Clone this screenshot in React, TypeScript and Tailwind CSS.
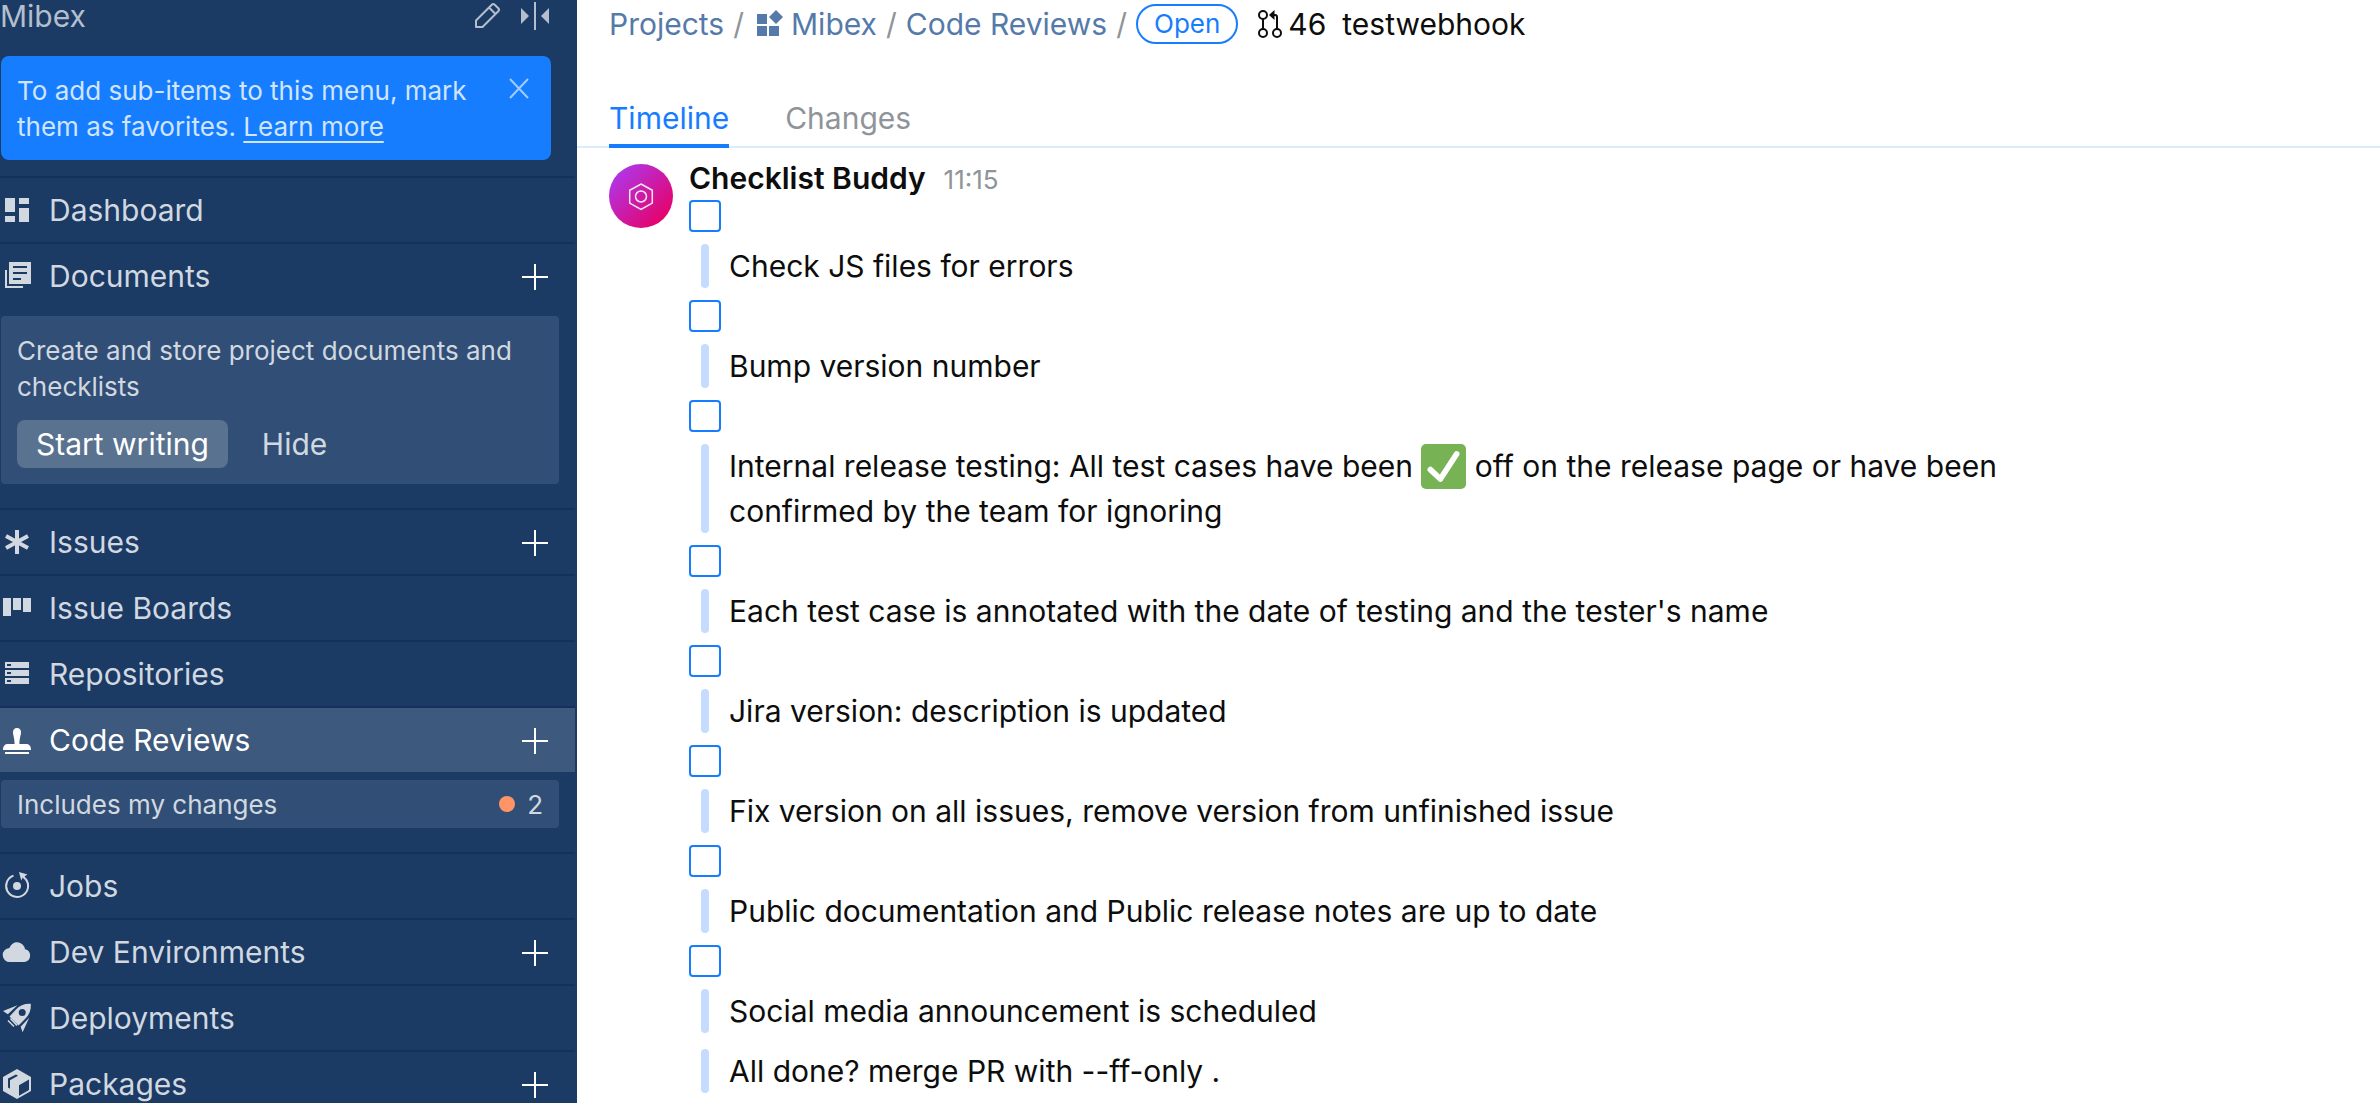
import type { ReactNode } from "react";

function Svg({ children }: { children: ReactNode }) {
  return (
    <svg viewBox="0 0 32 32" className="size-8 shrink-0" fill="currentColor" aria-hidden="true">
      {children}
    </svg>
  );
}

const icons: Record<string, ReactNode> = {
  dashboard: (
    <Svg>
      <path d="M4 4h10v14H4zM4 22h10v6H4zM18 4h10v6H18zM18 14h10v14H18z" />
    </Svg>
  ),
  documents: (
    <Svg>
      <path fillRule="evenodd" d="M8 2h22v22H8zM12 6v2h14V6zM12 12v2h14v-2zM12 18v2h8v-2z" />
      <path d="M4 10h2v16h16v2H4z" />
    </Svg>
  ),
  issues: (
    <Svg>
      <path d="M16 4v24M5 10l22 12M27 10L5 22" stroke="currentColor" strokeWidth="4" />
    </Svg>
  ),
  boards: (
    <Svg>
      <path d="M2 6h8v18H2zM12 6h8v12h-8zM22 6h8v14h-8z" />
    </Svg>
  ),
  repositories: (
    <Svg>
      <path
        fillRule="evenodd"
        d="M4 4h24v6H4zM6 6v2h4V6zM4 12h24v6H4zM6 14v2h4v-2zM4 20h24v6H4zM6 22v2h4v-2z"
      />
    </Svg>
  ),
  reviews: (
    <Svg>
      <path d="M16 4c2.600 0 4 1.800 4 4.200 0 3-1.600 6-1.600 11.800H25c3 0 5 1.800 5 6H2c0-4.200 2-6 5-6h6.600C13.600 14.200 12 11.200 12 8.200 12 5.800 13.400 4 16 4zM4 28h24v2H4z" />
    </Svg>
  ),
  jobs: (
    <Svg>
      <path
        d="M12.500 5.600A11 11 0 1 0 24.600 9"
        fill="none"
        stroke="currentColor"
        strokeWidth="2"
      />
      <circle cx="16" cy="16" r="4" />
      <path d="M18 2l8.500 2.600-2.900 1.600 1.600 2.400-1.800 1.200-1.600-2.300-1.600 2.900z" />
    </Svg>
  ),
  cloud: (
    <Svg>
      <path d="M9 26a7 7 0 0 1-.6-14A8 8 0 0 1 24 13.200 6.500 6.500 0 0 1 23.500 26z" />
    </Svg>
  ),
  deployments: (
    <Svg>
      <path
        fillRule="evenodd"
        d="M29.800 1.800C30.200 8 28.400 12.500 24 17l-6.500 6.500-9-9 6.500-7C18.500 3.500 23.500 1.500 29.800 1.800zM21.200 7a3.500 3.500 0 1 0 0 7 3.500 3.500 0 0 0 0-7z"
      />
      <path d="M16.500 3.200L6.800 12.200 2 9zM28.200 15.800l-8.600 9 2 5.400z" />
      <path d="M9.500 16.500l6.500 7M7 18.500l6 6" stroke="currentColor" strokeWidth="1.600" />
    </Svg>
  ),
  packages: (
    <Svg>
      <path
        fillRule="evenodd"
        d="M16 1l14 8v14l-14 8-14-8V9zM28 11.400l-10 5.800v10.600l10-5.800zM7 10.500v9l2 1.200v-8.400l8-4.600-2-1.200z"
      />
    </Svg>
  ),
};

type Item = { label: string; icon: string; add?: boolean; active?: boolean; panel?: ReactNode };

const items: Item[] = [
  { label: "Dashboard", icon: "dashboard" },
  {
    label: "Documents",
    icon: "documents",
    add: true,
    panel: (
      <div className="mt-2 mr-4 mb-6 ml-px rounded-sm bg-[#314f76] px-4 pt-[17px] pb-4 text-[#d1d8e0]">
        <p className="text-[26px] leading-9">Create and store project documents and checklists</p>
        <div className="mt-[15px] flex">
          <button className="h-12 rounded-lg bg-[#59728f] px-[19px] text-[30px] leading-[44px] text-white">
            Start writing
          </button>
          <button className="h-12 px-[34px] text-[30px] leading-[44px]">Hide</button>
        </div>
      </div>
    ),
  },
  { label: "Issues", icon: "issues", add: true },
  { label: "Issue Boards", icon: "boards" },
  { label: "Repositories", icon: "repositories" },
  {
    label: "Code Reviews",
    icon: "reviews",
    add: true,
    active: true,
    panel: (
      <a
        href="#my-changes"
        className="mt-2 mr-4 mb-6 ml-px flex h-12 items-center rounded-sm bg-[#314f76] px-4 pt-0.5 text-[26px] leading-9 text-[#d1d8e0]"
      >
        <span className="flex-1">Includes my changes</span>
        <span className="mr-3 mb-0.5 size-4 rounded-full bg-[#ff9466]" />
        <span>2</span>
      </a>
    ),
  },
  { label: "Jobs", icon: "jobs" },
  { label: "Dev Environments", icon: "cloud", add: true },
  { label: "Deployments", icon: "deployments" },
  { label: "Packages", icon: "packages", add: true },
];

function Sidebar() {
  return (
    <aside className="w-[577px] shrink-0 bg-[#1b3a64] pr-0.5 text-[#d1d8e0]">
      <header className="flex h-8 items-center text-[30px] leading-8 text-[#b3bfcd]">
        <span className="flex-1">Mibex</span>
        <button aria-label="Edit menu" className="mr-4">
          <Svg>
            <path
              d="M5 27v-6.500L20.800 4.700c.9-.9 2-.9 2.900 0l3.600 3.600c.9.900.9 2 0 2.900L11.500 27zM18 7.500l6.500 6.500"
              fill="none"
              stroke="currentColor"
              strokeWidth="2"
              strokeLinejoin="round"
            />
          </Svg>
        </button>
        <button aria-label="Collapse menu" className="mr-6">
          <Svg>
            <path d="M15 2h2v28h-2zM2 8v16l8-8zM30 8v16l-8-8z" />
          </Svg>
        </button>
      </header>

      <section className="mt-6 mr-6 mb-4 ml-px flex rounded-lg bg-[#177dff] px-4 pt-[17px] pb-[15px] text-[26px] leading-9 text-[#d1e5ff]">
        <p className="flex-1">
          To add sub-items to this menu, mark them as favorites.{" "}
          <a href="#favorites" className="underline decoration-2 underline-offset-[5px]">
            Learn more
          </a>
        </p>
        <button aria-label="Close" className="h-8 text-[#a2cbff]">
          <Svg>
            <path d="M7 6l18 19M25 6L7 25" stroke="currentColor" strokeWidth="2" />
          </Svg>
        </button>
      </section>

      <nav>
        {items.map((item) => (
          <div key={item.label} className="flex flex-col border-t-2 border-[#15305a]">
            <div
              className={
                item.active
                  ? "flex h-16 items-center bg-[#3d597d] pr-6 pl-px text-white"
                  : "flex h-16 items-center pr-6 pl-px"
              }
            >
              <a href={"#" + item.icon} className="flex flex-1 items-center gap-4 text-[30px] leading-[44px]">
                {icons[item.icon]}
                {item.label}
              </a>
              {item.add && (
                <button aria-label={"Add to " + item.label} className="text-white">
                  <Svg>
                    <path d="M15 4h2v26h-2zM3 16h26v2H3z" />
                  </Svg>
                </button>
              )}
            </div>
            {item.panel}
          </div>
        ))}
      </nav>
    </aside>
  );
}

const checklist: { id: string; text: ReactNode }[] = [
  { id: "js", text: "Check JS files for errors" },
  { id: "bump", text: "Bump version number" },
  {
    id: "testing",
    text: (
      <>
        Internal release testing: All test cases have been{" "}
        <svg
          viewBox="0 0 36 36"
          className="inline-block size-[45px] align-[-12px]"
          role="img"
          aria-label="checked"
        >
          <rect width="36" height="36" rx="4" fill="#77b255" />
          <path
            d="M7.500 20.500l8 7.500L28.500 8"
            fill="none"
            stroke="#fff"
            strokeWidth="4.600"
            strokeLinecap="round"
            strokeLinejoin="round"
          />
        </svg>{" "}
        off on the release page or have been confirmed by the team for ignoring
      </>
    ),
  },
  { id: "date", text: "Each test case is annotated with the date of testing and the tester's name" },
  { id: "jira", text: "Jira version: description is updated" },
  { id: "fix", text: "Fix version on all issues, remove version from unfinished issue" },
  { id: "docs", text: "Public documentation and Public release notes are up to date" },
  { id: "social", text: "Social media announcement is scheduled" },
];

function Quote({ children }: { children: ReactNode }) {
  return (
    <div className="ml-3 flex gap-5">
      <span className="w-2 shrink-0 rounded-full bg-[#c5dcff]" />
      <div className="max-w-[1360px] leading-[44px]">{children}</div>
    </div>
  );
}

export default function App() {
  return (
    <div className="flex h-screen overflow-hidden bg-white font-['Inter',sans-serif] text-[30px] leading-[44px] text-[#0d0d0d]">
      <Sidebar />
      <main className="min-w-0 flex-1">
        <nav className="flex h-12 items-center pl-8 text-[#557aa9]">
          <a href="#projects">Projects</a>
          <span className="px-[9px] text-[#8f9499]">/</span>
          <a href="#mibex" className="flex items-center">
            <svg viewBox="0 0 32 32" className="mr-1.5 size-8" fill="currentColor" aria-hidden="true">
              <path d="M4 6h10v10H4zM4 18h10v10H4zM16 18h10v10H16zM23 2l7 7-7 7-7-7z" />
            </svg>
            Mibex
          </a>
          <span className="px-[9px] text-[#8f9499]">/</span>
          <a href="#reviews">Code Reviews</a>
          <span className="px-[9px] text-[#8f9499]">/</span>
          <span className="h-10 rounded-full border-2 border-[#177dff] px-4 text-[26px] leading-9 text-[#177dff]">
            Open
          </span>
          <span className="ml-4 flex items-center text-[#0d0d0d]">
            <svg
              viewBox="0 0 32 32"
              className="mr-0.5 size-8"
              fill="none"
              stroke="currentColor"
              strokeWidth="2"
              aria-hidden="true"
            >
              <circle cx="9" cy="7" r="4" />
              <circle cx="9" cy="25" r="4" />
              <circle cx="23" cy="25" r="4" />
              <path d="M9 11v10M23 21V9c0-1.500-.8-2-2-2h-3" />
              <path d="M20.500 2v10L15 7z" fill="currentColor" stroke="none" />
            </svg>
            46
          </span>
          <span className="ml-4 text-[#0d0d0d]">testwebhook</span>
        </nav>

        <div role="tablist" className="mt-10 flex h-[60px] gap-14 border-b-2 border-[#d9edff] pl-8">
          <button
            role="tab"
            aria-selected="true"
            className="-mb-0.5 flex border-b-4 border-[#177dff] pt-2 text-[#177dff]"
          >
            Timeline
          </button>
          <button role="tab" aria-selected="false" className="flex pt-2 text-[#8f9499]">
            Changes
          </button>
        </div>

        <article className="flex gap-4 pt-2 pl-8">
          <svg viewBox="0 0 64 64" className="mt-2 size-16 shrink-0" role="img" aria-label="Checklist Buddy">
            <defs>
              <linearGradient id="avatar" x1="0" y1="0" x2="1" y2="1">
                <stop offset="0.1" stopColor="#af37ec" />
                <stop offset="0.9" stopColor="#e80063" />
              </linearGradient>
            </defs>
            <circle cx="32" cy="32" r="32" fill="url(#avatar)" />
            <g fill="none" stroke="#fff" strokeOpacity="0.9" strokeWidth="1.500">
              <path d="M32 20l11.300 6.300v12.800L32 45.300l-11.300-6.200V26.300z" />
              <circle cx="32" cy="32.500" r="5.500" />
            </g>
          </svg>
          <div className="min-w-0 flex-1">
            <h2 className="flex h-11 items-baseline gap-[18px] font-semibold">
              Checklist Buddy
              <time className="text-[26px] leading-9 font-normal text-[#8f9499]">11:15</time>
            </h2>
            <ul>
              {checklist.map((entry) => (
                <li key={entry.id} className="mb-3 flex flex-col gap-3">
                  <input
                    type="checkbox"
                    aria-labelledby={entry.id}
                    className="size-8 appearance-none rounded-sm border-2 border-[#177dff] bg-white"
                  />
                  <Quote>
                    <label id={entry.id}>{entry.text}</label>
                  </Quote>
                </li>
              ))}
            </ul>
            <div className="mt-4">
              <Quote>All done? merge PR with --ff-only .</Quote>
            </div>
          </div>
        </article>
      </main>
    </div>
  );
}
